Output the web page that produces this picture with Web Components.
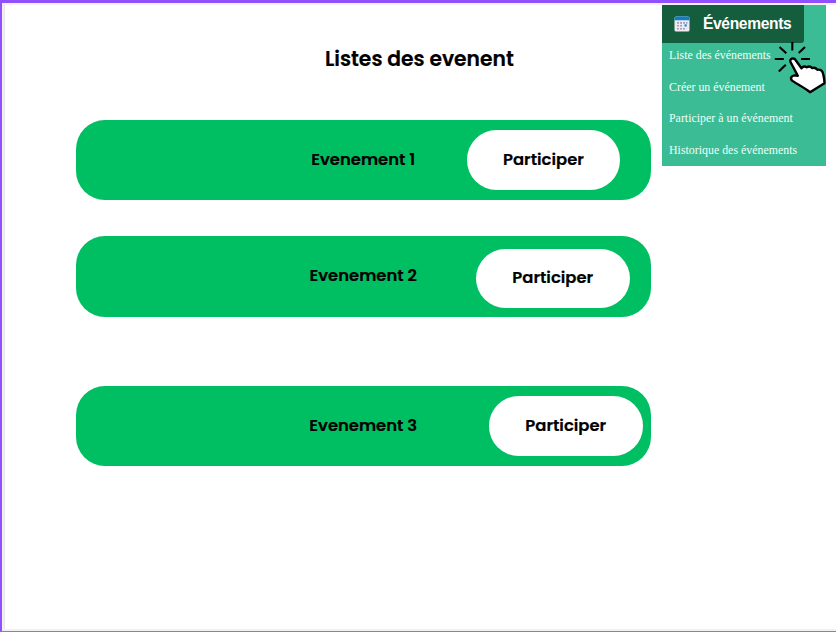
<!DOCTYPE html>
<html lang="fr">
<head>
<meta charset="utf-8">
<title>Listes des evenent</title>
<style>
html,body{margin:0;height:100%;overflow:hidden;background:#fff}
</style>
</head>
<body>
<app-frame>
  <event-list heading="Listes des evenent">
    <event-card label="Evenement 1" style="--end:30.300px;--top:10.3px">Participer</event-card>
    <event-card label="Evenement 2" style="--gap:36px;--end:21px;--top:12.2px">Participer</event-card>
    <event-card label="Evenement 3" style="--gap:69.2px;--end:8px;--top:10.5px;--label-top:28.200px">Participer</event-card>
  </event-list>
  <event-menu slot="menu" heading="Événements">
    <menu-entry>Liste des événements</menu-entry>
    <menu-entry>Créer un événement</menu-entry>
    <menu-entry>Participer à un événement</menu-entry>
    <menu-entry>Historique des événements</menu-entry>
  </event-menu>
</app-frame>
<script>
function define(name, render) {
  customElements.define(name, class extends HTMLElement {
    constructor() {
      super();
      this.attachShadow({mode: 'open'}).innerHTML = render(this);
    }
  });
}

define('app-frame', () => `
<style>
:host{display:block;box-sizing:border-box;width:836px;height:632px;background:#f1f0f5;border-top:3px solid #9050fc;border-left:2px solid #9050fc;border-bottom:1px solid #a06aef;padding:2px 0 2px 2px}
.page{display:grid;grid-template-columns:657px 165px;box-sizing:border-box;height:100%;background:#fff;border-left:1px solid #e8e8ec;align-items:start}
</style>
<div class="page"><slot></slot><slot name="menu"></slot></div>`);

define('event-list', el => `
<style>
:host{display:block;box-sizing:border-box;padding:39px 12px 0 71px;font-family:Poppins,Inter,sans-serif;color:#000;-webkit-text-stroke:.2px #000}
h1{margin:0 0 46px 249px;font-size:20.3px;line-height:30px;font-weight:600;white-space:nowrap}
</style>
<h1>${el.getAttribute('heading')}</h1><slot></slot>`);

define('event-card', el => `
<style>
:host{display:grid;grid-template-columns:minmax(0,1fr) 153.5px;box-sizing:border-box;width:574.5px;height:80.4px;margin-top:var(--gap,0);padding-right:var(--end);border-radius:29px;background:#00bf63;font-size:16.4px;font-weight:600;line-height:24px;white-space:nowrap}
.label{grid-area:1/1;padding:var(--label-top,27.500px) 0 0;width:574.5px;text-align:center}
button{grid-area:1/2;margin:var(--top) 0 0;padding:0;height:59.300px;border:0;border-radius:29.65px;background:#fff;font:inherit;color:#000;z-index:1}
</style>
<span class="label">${el.getAttribute('label')}</span><button><slot></slot></button>`);

define('event-menu', el => `
<style>
:host{display:block;box-sizing:border-box;position:relative;width:164px;height:161px;background:#3bbc95}
header{display:flex;align-items:center;box-sizing:border-box;width:142px;height:38px;padding-left:12px;background:#145d3d;border-radius:0 0 3px 0;color:#fff;font:bold 15.6px/38px "Liberation Sans",Arial,sans-serif;letter-spacing:-.35px}
header svg{margin-right:13px}
nav{display:flex;flex-direction:column;padding:0 0 0 7px}
pointer-hand{position:absolute;left:112px;top:36px}
</style>
<header>
<svg width="16" height="16" viewBox="0 0 16 16"><rect x=".5" y=".5" width="15" height="15" rx="1.5" fill="#eee9f3"/><path d="M.5 4.3V2A1.5 1.5 0 0 1 2 .5h12A1.5 1.5 0 0 1 15.500 2v2.300z" fill="#0c7fc5"/><g fill="#a6a1b3"><path d="M3 6h2v1.700H3zM6 6h2v1.700H6zM9 6h2v1.700H9zM12 6h1.500v1.700H12zM3 9h2v1.500H3zM6 9h2v1.500H6zM3 12h2v1.500H3zM6 12h2v1.500H6zM9 12h2v1.500H9z"/></g><path d="M10.500 8.300h2.200v2.200h-2.200z" fill="#158bd0"/></svg>
<span>${el.getAttribute('heading')}</span></header>
<nav><slot></slot></nav>
<pointer-hand></pointer-hand>`);

define('menu-entry', () => `
<style>
:host{display:block;height:31.7px;line-height:25px;color:#edfff8;font-family:"Liberation Serif","Times New Roman",serif;font-size:11.9px;white-space:nowrap}
</style>
<slot></slot>`);

define('pointer-hand', () => `
<style>:host{display:block;width:54px;height:54px}svg{display:block;overflow:visible}</style>
<svg width="54" height="54" viewBox="0 0 54 54" fill="none" stroke="#000">
<path d="M18.300 1v8.500M5.500 6l6.800 6.300M31 6l-6.300 6M.8 18h9M27 18h9M4.800 30.500l7-6.800" stroke-width="2.100"/>
<path d="M16.500 21c-1.300-3.300 3.200-5 5.200-1.800l5.800 8c1.400-1.700 3.500-2 5.300-.9 1.900-1.300 3.800-1.200 5.300.8 2-.8 3.800-.2 5.300 1.600 3.600-.4 5.200 1.500 5.800 4.400.9 3.200 1.200 5.600 1.300 9.100L36 51.200c-5.800-5.100-11.500-7-17.900-11.600-2.400-2.500-.4-5 2.500-5.200l3.200.3z" fill="#fff" stroke-width="2.400" stroke-linejoin="round"/>
</svg>`);
</script>
</body>
</html>
